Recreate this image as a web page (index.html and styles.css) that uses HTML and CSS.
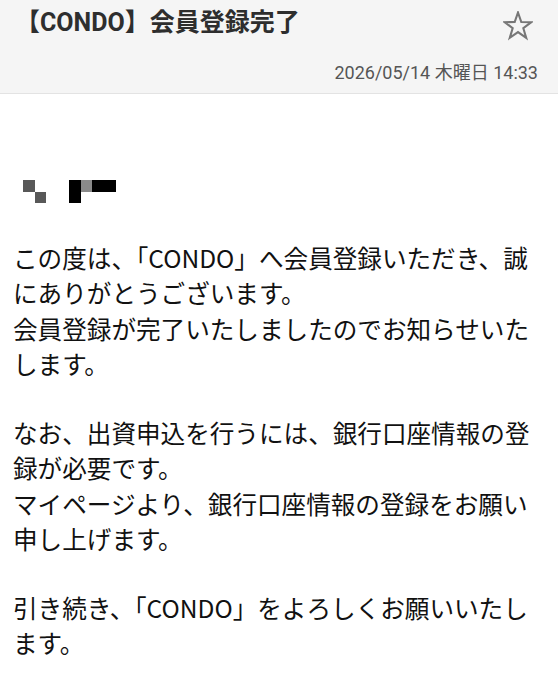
FILE: index.html
```html
<!DOCTYPE html>
<html lang="ja">
<head>
    <meta charset="UTF-8">
    <meta name="viewport" content="width=device-width, initial-scale=1.0">
    <title>【CONDO】会員登録完了</title>
    <link rel="stylesheet" href="styles.css">
</head>
<body>
    <header class="mail-header">
        <div class="subject-row">
            <h1 class="subject">【CONDO】会員登録完了</h1>
            <button class="star-btn" aria-label="スター">
                <svg width="30" height="30" viewBox="0 0 30 30">
                    <polygon points="15,1.5 18.29,10.97 28.31,11.17 20.33,17.23 23.23,26.83 15,21.1 6.77,26.83 9.67,17.23 1.69,11.17 11.71,10.97"
                             fill="none" stroke="#777" stroke-width="2.1" stroke-linejoin="miter"/>
                </svg>
            </button>
        </div>
        <div class="date">2026/05/14 木曜日 14:33</div>
    </header>

    <div class="mail-body">
        <p class="addressee">
            <!-- name is pixelated in the screenshot -->
            <span class="mosaic mosaic-a">
                <i class="cell dark c1 r1"></i>
                <i class="cell dark c2 r2"></i>
            </span>
            <span class="mosaic mosaic-b">
                <i class="cell black c1 r1"></i>
                <i class="cell black c1 r2"></i>
                <i class="cell grey c2 r1"></i>
                <i class="cell black c3 r1"></i>
                <i class="cell black c4 r1"></i>
            </span>
        </p>
        <p>この度は、「CONDO」へ会員登録いただき、誠にありがとうございます。<br>会員登録が完了いたしましたのでお知らせいたします。</p>
        <p>なお、出資申込を行うには、銀行口座情報の登録が必要です。<br>マイページより、銀行口座情報の登録をお願い申し上げます。</p>
        <p>引き続き、「CONDO」をよろしくお願いいたします。</p>
    </div>
</body>
</html>
```

FILE: styles.css
```css
body {
    margin: 0;
    padding: 0;
    background: #fff;
    font-family: Roboto, "Noto Sans CJK JP", sans-serif;
    color: #111;
}
.mail-header {
    background: #f5f5f5;
    border-bottom: 1px solid #e3e3e3;
    padding: 6px 20px 8px 15px;
}
.subject-row {
    display: flex;
    justify-content: space-between;
    align-items: flex-start;
}
.subject {
    margin: 0;
    font-size: 25px;
    line-height: 34px;
    font-weight: bold;
    color: #2e2e2e;
}
.star-btn {
    background: none;
    border: none;
    padding: 0;
    margin: 5px 5px 0 0;
    width: 30px;
    height: 30px;
    cursor: pointer;
}
.star-btn svg {
    display: block;
}
.date {
    margin-top: 20px;
    text-align: right;
    font-size: 18px;
    line-height: 24px;
    color: #555;
}
.mail-body {
    padding: 80px 13px 0 13px;
    font-family: "Noto Sans CJK JP", sans-serif;
    font-size: 24.6px;
    line-height: 35.5px;
}
.mail-body p {
    margin: 0 0 33px 0;
}
.mail-body .addressee {
    display: flex;
    align-items: center;
    height: 35.5px;
    margin-bottom: 30px;
}
.mosaic {
    display: grid;
    grid-template-rows: repeat(2, 11.6px);
}
.mosaic-a {
    grid-template-columns: repeat(2, 11.6px);
    margin-left: 10px;
}
.mosaic-b {
    grid-template-columns: repeat(4, 11.6px);
    margin-left: 23px;
}
.cell {
    display: block;
}
.c1 { grid-column: 1; }
.c2 { grid-column: 2; }
.c3 { grid-column: 3; }
.c4 { grid-column: 4; }
.r1 { grid-row: 1; }
.r2 { grid-row: 2; }
.dark { background: #585858; }
.grey { background: #8a8a8a; }
.black { background: #000; }
```
